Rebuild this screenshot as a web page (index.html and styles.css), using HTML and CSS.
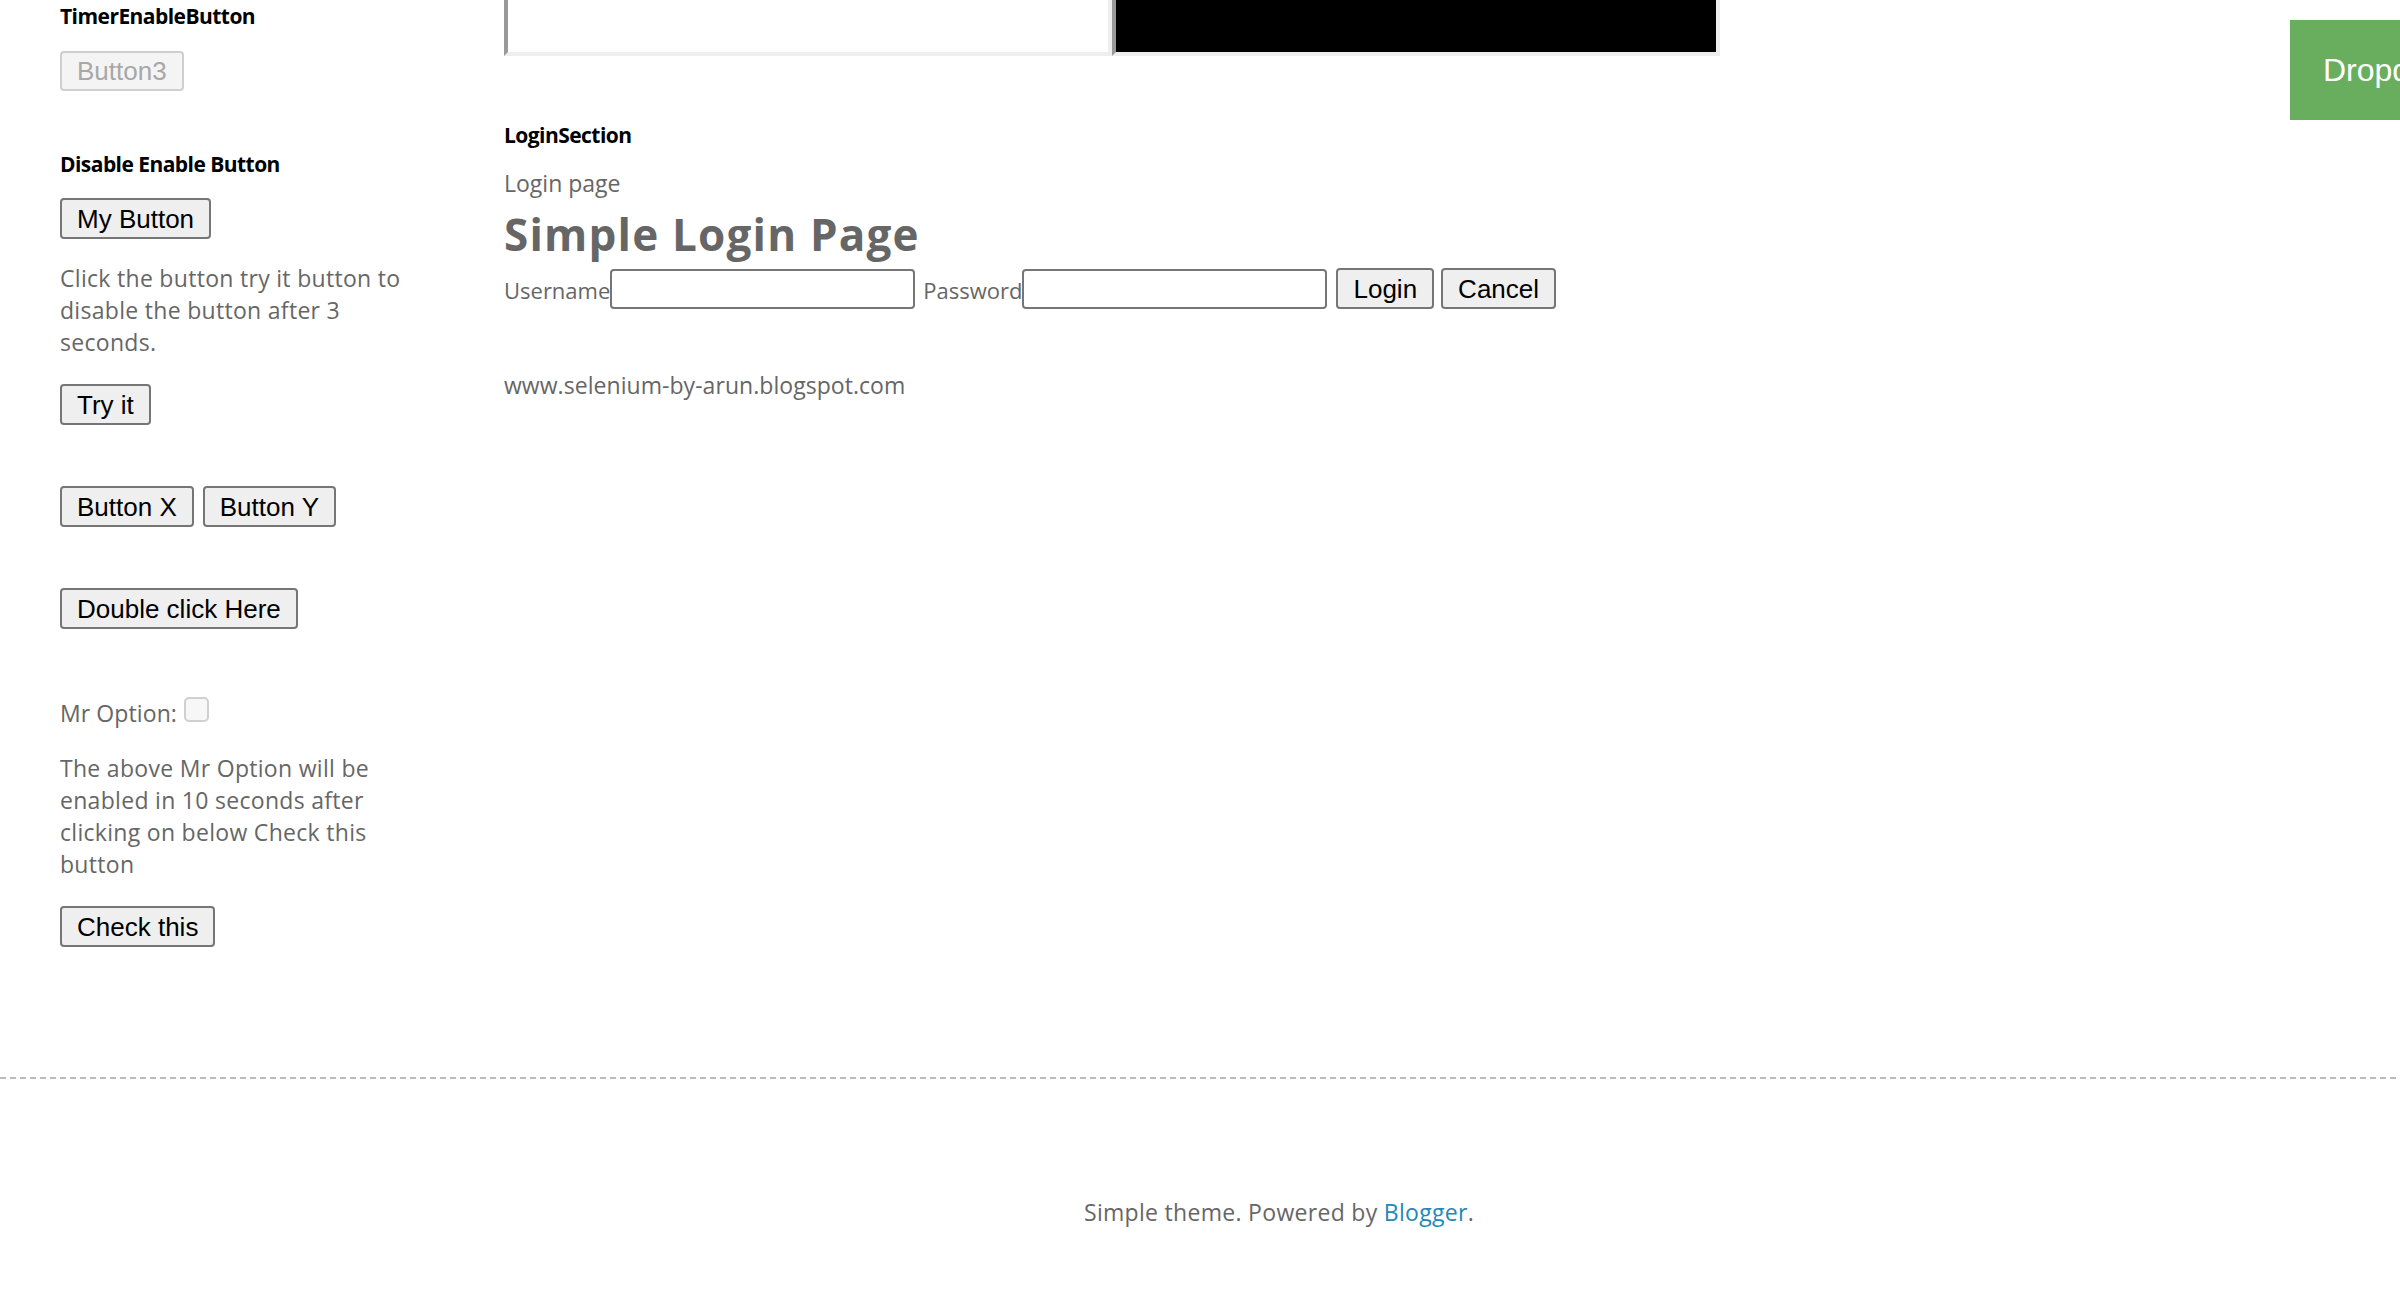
FILE: index.html
```html
<!DOCTYPE html>
<html lang="en">
<head>
<meta charset="utf-8">
<title>Selenium by Arun</title>
<link rel="stylesheet" href="styles.css">
</head>
<body>
<div class="page">
  <div class="columns">
    <aside class="sidebar">
      <h2 class="widget-title title-first">TimerEnableButton</h2>
      <button class="btn btn-timer" disabled>Button3</button>

      <h2 class="widget-title title-disable">Disable Enable Button</h2>
      <button class="btn btn-my">My Button</button>
      <p class="text text-click">Click the button try it button to disable the button after 3 seconds.</p>
      <button class="btn btn-try">Try it</button>
      <div class="btn-row">
        <button class="btn">Button X</button>
        <button class="btn">Button Y</button>
      </div>
      <button class="btn btn-double">Double click Here</button>
      <div class="option">
        <span class="option-label">Mr Option:</span>
        <input class="option-check" type="checkbox" disabled>
      </div>
      <p class="text text-above">The above Mr Option will be enabled in 10 seconds after clicking on below Check this button</p>
      <button class="btn btn-check">Check this</button>
    </aside>

    <main class="main">
      <div class="frames">
        <div class="frame frame-light"></div>
        <div class="frame frame-dark"></div>
      </div>
      <h2 class="widget-title title-login">LoginSection</h2>
      <p class="text login-caption">Login page</p>
      <h1 class="login-title">Simple Login Page</h1>
      <form class="login-form">
        <label class="text field-label">Username</label><input class="field field-user" type="text">
        <label class="text field-label field-label-pass">Password</label><input class="field" type="password">
        <button class="btn btn-login" type="button">Login</button>
        <button class="btn btn-cancel" type="button">Cancel</button>
      </form>
      <p class="text site-url">www.selenium-by-arun.blogspot.com</p>
    </main>
  </div>

  <footer class="footer">
    <div class="footer-rule"></div>
    <p class="text footer-text">Simple theme. Powered by <a class="footer-link" href="#">Blogger</a>.</p>
  </footer>

  <div class="dropdown">
    <button class="dropbtn">Dropdown</button>
  </div>
</div>
</body>
</html>
```

FILE: styles.css
```css
html {
  overflow: hidden;
  background: #ffffff;
}

body {
  margin: 0;
  background: #ffffff;
  color: #666666;
  font-family: "Open Sans", "DejaVu Sans", sans-serif;
}

.page {
  position: relative;
  width: 2558px;
}

.columns {
  display: flex;
  align-items: flex-start;
}

/* ---------- sidebar ---------- */
.sidebar {
  width: 372px;
  margin-left: 60px;
  padding-top: 2px;
  display: flex;
  flex-direction: column;
  align-items: flex-start;
}

.widget-title {
  margin: 0;
  font-family: "Open Sans", "DejaVu Sans", sans-serif;
  font-size: 21px;
  font-weight: 700;
  line-height: 28px;
  color: #000000;
  letter-spacing: -0.55px;
}

.text {
  margin: 0;
  font-size: 23px;
  line-height: 32px;
  letter-spacing: 0.3px;
  color: #666666;
}

.btn {
  box-sizing: border-box;
  height: 41px;
  padding: 0 15px;
  border: 2px solid #767676;
  border-radius: 4px;
  background: #efefef;
  color: #000000;
  font-family: "Liberation Sans", Arial, sans-serif;
  font-size: 26px;
  line-height: 1;
  cursor: default;
}

.btn:disabled {
  border-color: #cfcfcf;
  background: #f4f4f4;
  color: #a8a8a8;
}

.btn-timer { margin-top: 21px; height: 40px; }
.title-disable { margin-top: 59px; }
.btn-my { margin-top: 20px; }
.text-click { margin-top: 23px; }
.btn-try { margin-top: 26px; }

.btn-row {
  margin-top: 61px;
  display: flex;
  gap: 9px;
}

.btn-double { margin-top: 61px; }

.option {
  margin-top: 68px;
  display: flex;
  align-items: center;
  gap: 7px;
  font-size: 23px;
  line-height: 32px;
  letter-spacing: 0.1px;
}

.option-check {
  appearance: none;
  -webkit-appearance: none;
  box-sizing: border-box;
  width: 25px;
  height: 25px;
  margin: 0 0 7px 0;
  border: 2px solid #d0d0d0;
  border-radius: 5px;
  background: #f7f7f7;
}

.text-above { margin-top: 23px; }
.btn-check { margin-top: 26px; }

/* ---------- main ---------- */
.main {
  margin-left: 72px;
  display: flex;
  flex-direction: column;
  align-items: flex-start;
}

.frames {
  display: flex;
}

.frame {
  box-sizing: border-box;
  width: 608px;
  height: 56px;
  border-left: 4px solid #9a9a9a;
  border-bottom: 4px solid #eeeeee;
  border-right: 4px solid #eeeeee;
}

.frame-light { background: #ffffff; }
.frame-dark { background: #000000; }

.title-login { margin-top: 65px; }
.login-caption { margin-top: 18px; letter-spacing: 0; }

.login-title {
  margin: 14px 0 0;
  font-family: "Open Sans", "DejaVu Sans", sans-serif;
  font-size: 44px;
  font-weight: 700;
  line-height: 42px;
  letter-spacing: 1.2px;
  color: #666666;
}

.login-form {
  margin-top: 13px;
  display: flex;
  align-items: center;
}

.field-label {
  padding-top: 2px;
  font-size: 22px;
  letter-spacing: 0;
}

.field {
  box-sizing: border-box;
  width: 305px;
  height: 40px;
  margin: 0;
  border: 2px solid #767676;
  border-radius: 4px;
  background: #ffffff;
}

.field-user { margin-right: 8px; }

.btn-login { margin-left: 9px; }
.btn-cancel { margin-left: 7px; }

.site-url { margin-top: 60px; letter-spacing: 0.05px; }

/* ---------- footer ---------- */
.footer {
  margin-top: 130px;
}

.footer-rule {
  height: 2px;
  background: repeating-linear-gradient(90deg, #bbbbbb 0 6px, transparent 6px 10px);
}

.footer-text {
  margin-top: 117px;
  text-align: center;
}

.footer-link {
  color: #2288bb;
  text-decoration: none;
}

/* ---------- dropdown ---------- */
.dropdown {
  position: absolute;
  top: 20px;
  left: 2290px;
}

.dropbtn {
  height: 100px;
  padding: 0 33px;
  border: none;
  background: #69ad5e;
  color: #ffffff;
  font-family: "Liberation Sans", Arial, sans-serif;
  font-size: 32px;
  line-height: 100px;
}
```
